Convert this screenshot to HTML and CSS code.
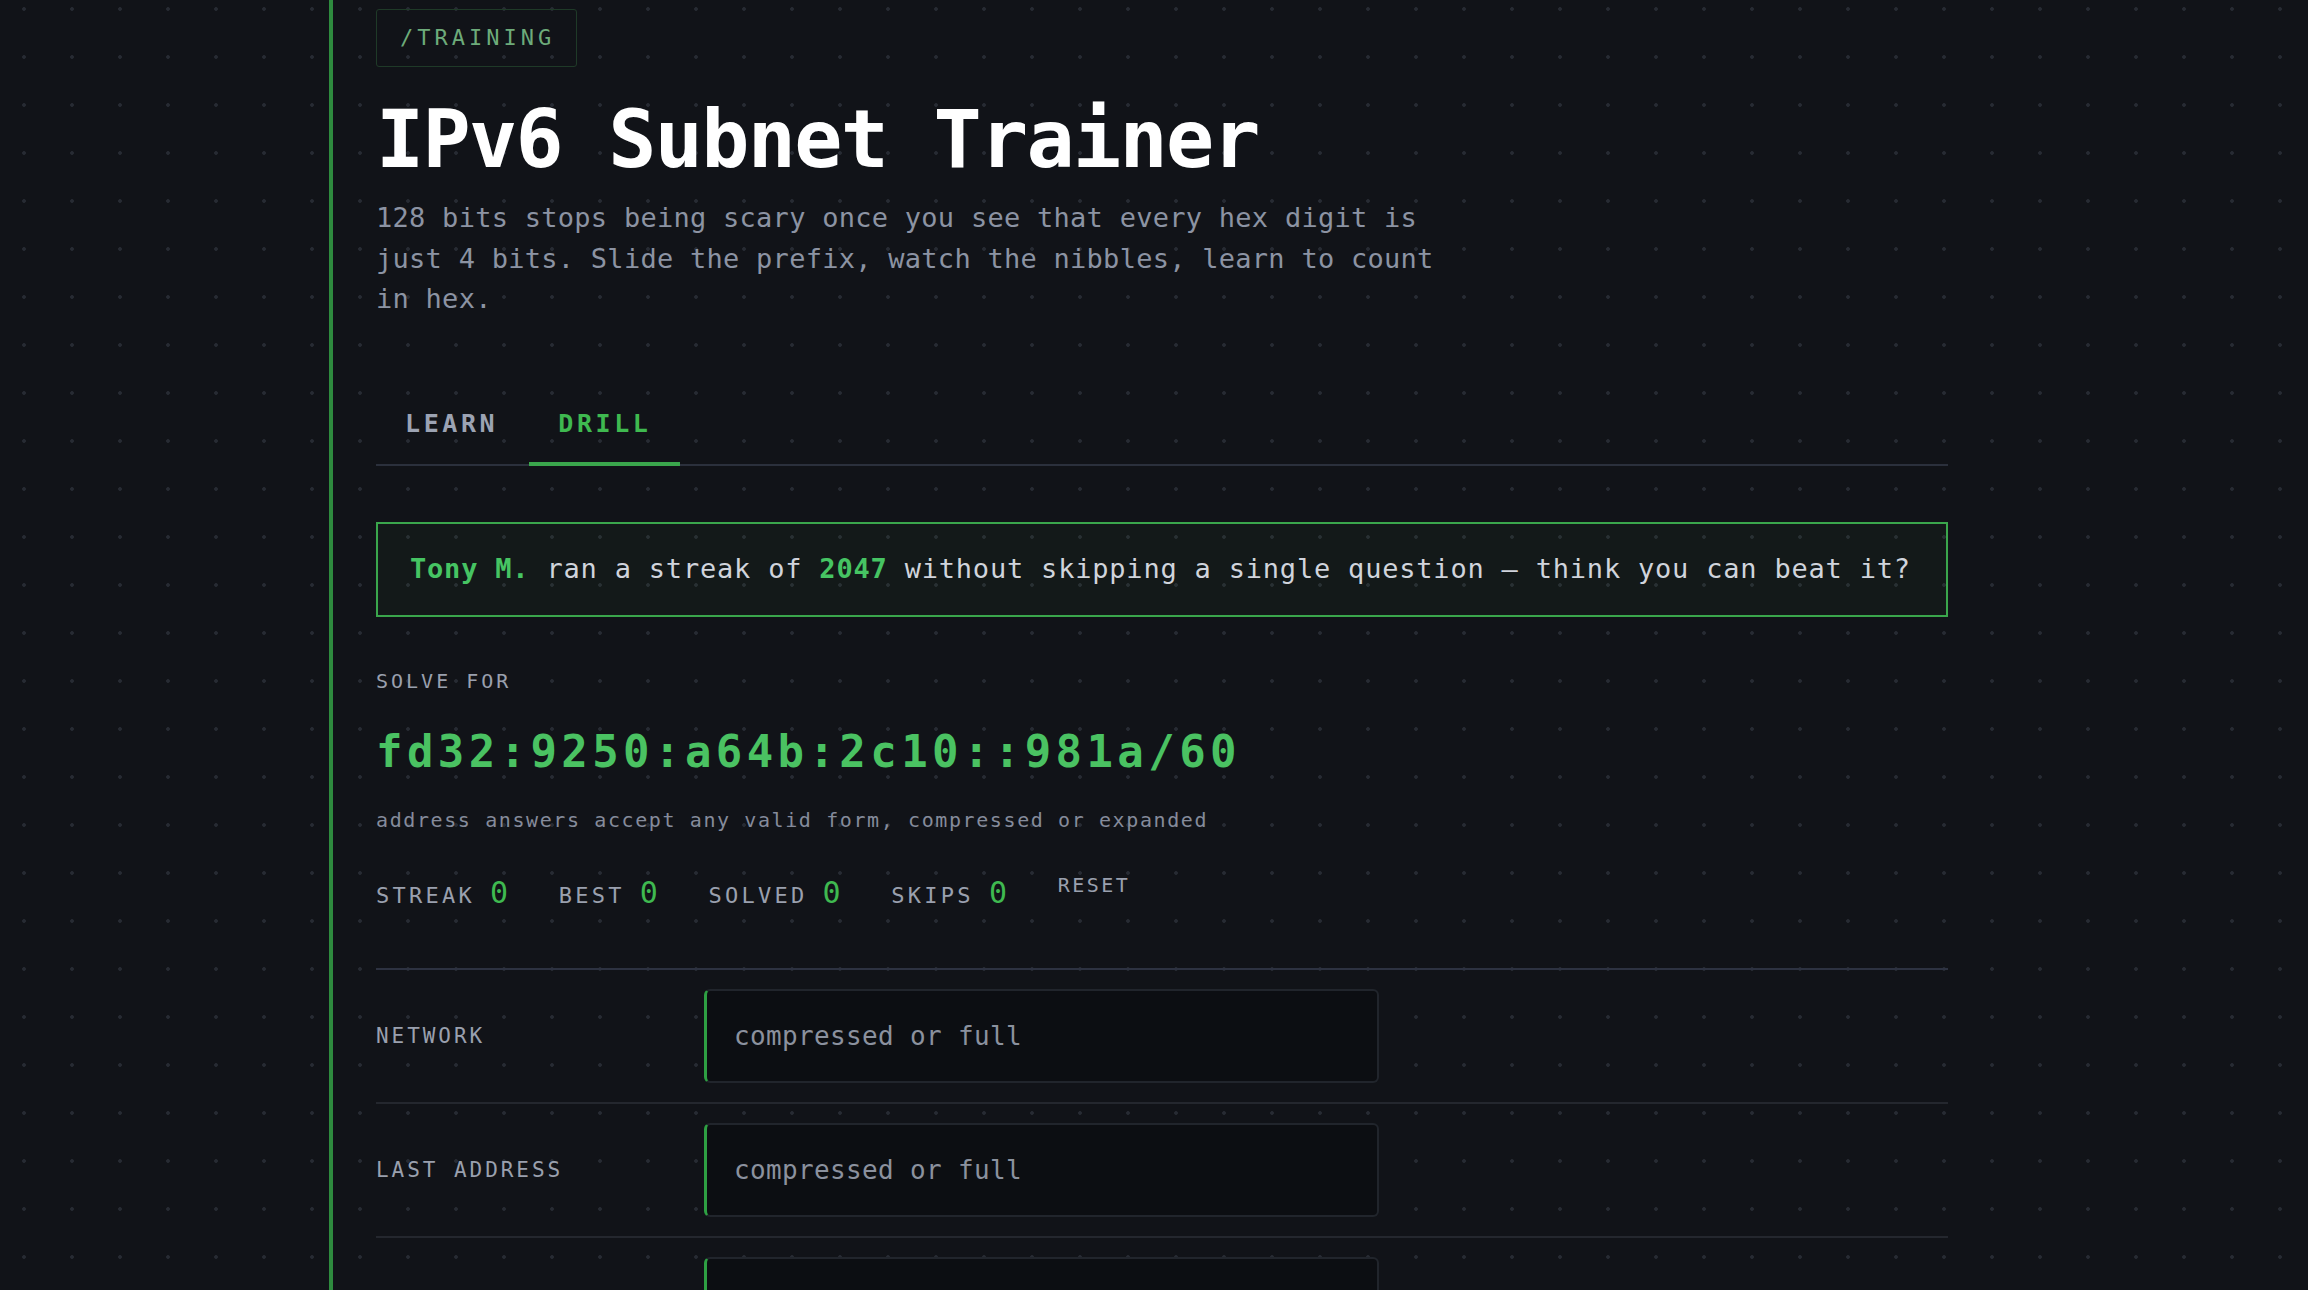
FILE: index.html
```html
<!DOCTYPE html>
<html lang="en">
<head>
<meta charset="utf-8">
<title>IPv6 Subnet Trainer</title>
<link rel="stylesheet" href="styles.css">
</head>
<body>
<main class="trainer">
  <header class="intro">
    <span class="tag">/TRAINING</span>
    <h1 class="title">IPv6 Subnet Trainer</h1>
    <p class="lede">128 bits stops being scary once you see that every hex digit is just 4 bits. Slide the prefix, watch the nibbles, learn to count in hex.</p>
  </header>

  <nav class="tabs">
    <button class="tab" type="button">LEARN</button>
    <button class="tab tab--active" type="button">DRILL</button>
  </nav>

  <div class="record">
    <span class="record__hl">Tony M.</span> ran a streak of <span class="record__hl">2047</span> without skipping a single question — think you can beat it?
  </div>

  <section class="drill">
    <div class="drill__eyebrow">SOLVE FOR</div>
    <div class="drill__question">fd32:9250:a64b:2c10::981a/60</div>
    <p class="drill__hint">address answers accept any valid form, compressed or expanded</p>

    <div class="stats">
      <div class="stat"><span class="stat__label">STREAK</span><span class="stat__value">0</span></div>
      <div class="stat"><span class="stat__label">BEST</span><span class="stat__value">0</span></div>
      <div class="stat"><span class="stat__label">SOLVED</span><span class="stat__value">0</span></div>
      <div class="stat"><span class="stat__label">SKIPS</span><span class="stat__value">0</span></div>
      <button class="stats__reset" type="button">RESET</button>
    </div>

    <form class="answers">
      <label class="answer">
        <span class="answer__label">NETWORK</span>
        <input class="answer__input" type="text" placeholder="compressed or full">
      </label>
      <label class="answer">
        <span class="answer__label">LAST ADDRESS</span>
        <input class="answer__input" type="text" placeholder="compressed or full">
      </label>
      <label class="answer">
        <span class="answer__label">NEXT NETWORK</span>
        <input class="answer__input" type="text" placeholder="compressed or full">
      </label>
    </form>
  </section>
</main>
</body>
</html>
```

FILE: styles.css
```css
/* reset */
* {
  box-sizing: border-box;
  margin: 0;
  padding: 0;
}

html,
body {
  overflow: hidden;
}

body {
  min-height: 100vh;
  background-color: #111318;
  background-image: radial-gradient(circle, #272b33 0, #272b33 1.5px, transparent 2.2px);
  background-size: 48px 48px;
  background-position: 0 -15px;
  font-family: "DejaVu Sans Mono", "Liberation Mono", monospace;
  color: #d0d4dc;
}

.trainer {
  width: 1650px;
  min-height: 100vh;
  margin: 0 auto;
  padding: 9px 31px 0 43px;
  border-left: 4px solid #2e8b3e;
}

/* header */
.tag {
  display: inline-block;
  padding: 14px 21px 14px 23px;
  border: 1px solid #1f3a28;
  border-radius: 3px;
  font-size: 22px;
  line-height: 28px;
  letter-spacing: 4px;
  color: #6dab7a;
}

.title {
  margin-top: 29px;
  font-size: 80px;
  line-height: 88px;
  font-weight: bold;
  letter-spacing: -1.7px;
  color: #fff;
}

.lede {
  max-width: 1090px;
  margin-top: 14px;
  font-size: 27px;
  line-height: 40.5px;
  letter-spacing: 0.27px;
  color: #8c93a3;
}

/* tabs */
.tabs {
  display: flex;
  margin-top: 69px;
  border-bottom: 2px solid #2b303c;
}

.tab {
  margin-bottom: -2px;
  padding: 20px 28px 23px 29px;
  background: none;
  border: 0;
  border-bottom: 4px solid transparent;
  font-family: inherit;
  font-size: 25px;
  line-height: 30px;
  font-weight: bold;
  letter-spacing: 3.6px;
  color: #9ca3b3;
  cursor: pointer;
}

.tab + .tab {
  margin-left: 3px;
}

.tab--active {
  color: #3fb950;
  border-bottom-color: #3aa64c;
}

/* leaderboard banner */
.record {
  margin-top: 56px;
  padding: 25px 32px 26px;
  border: 2px solid #3aa64c;
  background-color: rgba(60, 170, 80, 0.045);
  font-size: 27px;
  line-height: 40.5px;
  letter-spacing: 0.8px;
  color: #d0d4dc;
}

.record__hl {
  font-weight: bold;
  color: #46c463;
}

/* question */
.drill__eyebrow {
  margin-top: 52px;
  font-size: 20px;
  line-height: 24px;
  letter-spacing: 3px;
  color: #9aa0ae;
}

.drill__question {
  margin-top: 32px;
  font-size: 44px;
  line-height: 53px;
  font-weight: bold;
  letter-spacing: 4.4px;
  color: #4ac262;
}

.drill__hint {
  margin-top: 30px;
  font-size: 20px;
  line-height: 24px;
  letter-spacing: 1.6px;
  color: #858b9b;
}

/* score line */
.stats {
  display: flex;
  align-items: flex-start;
  gap: 50.7px;
  margin-top: 43px;
}

.stat {
  font-size: 22px;
  line-height: 36px;
}

.stat__label {
  letter-spacing: 3.26px;
  color: #9aa0ae;
}

.stat__value {
  margin-left: 15px;
  font-size: 30px;
  color: #3fb950;
}

.stats__reset {
  background: none;
  border: 0;
  font-family: inherit;
  font-size: 20px;
  line-height: 20px;
  letter-spacing: 2.5px;
  color: #9aa0ae;
  cursor: pointer;
}

/* answer rows */
.answers {
  margin-top: 53.5px;
  border-top: 2px solid #2d3241;
}

.answer {
  display: flex;
  align-items: center;
  padding: 19px 0;
  border-bottom: 2px solid #24272e;
}

.answer__label {
  width: 328px;
  flex-shrink: 0;
  font-size: 21px;
  line-height: 24px;
  letter-spacing: 2.95px;
  color: #9aa0ae;
}

.answer__input {
  width: 675px;
  height: 94px;
  padding: 0 27px;
  background-color: #0c0e12;
  border: 2px solid #21252c;
  border-left: 3px solid #2ea043;
  border-radius: 6px;
  outline: none;
  font-family: inherit;
  font-size: 26px;
  letter-spacing: 0.35px;
  color: #d0d4dc;
}

.answer__input::placeholder {
  color: #8b919e;
}
```
